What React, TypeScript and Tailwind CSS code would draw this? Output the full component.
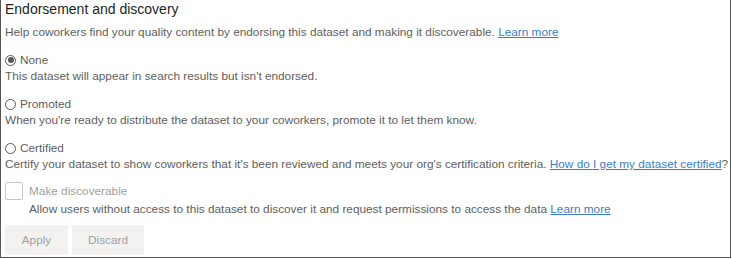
import React from "react";

function Radio({ checked }: { checked?: boolean }) {
  return (
    <span className="inline-flex items-center justify-center w-[11px] h-[11px] rounded-full border border-[#555] mr-[4px] shrink-0">
      {checked && <span className="w-[6px] h-[6px] rounded-full bg-[#555]" />}
    </span>
  );
}

export default function App() {
  return (
    <div className="w-[732px] h-[259px] bg-white" style={{ fontFamily: '"Liberation Sans", Arial, sans-serif' }}>
      <div className="w-[731px] h-[258px] border-l border-r border-b border-[#555] pl-[4px] text-[11.8px] text-[#605e5c] leading-[16px]">
        <div className="text-[14px] leading-[18px] text-[#201f1e]">Endorsement and discovery</div>
        <div className="mt-[6px]">
          Help coworkers find your quality content by endorsing this dataset and making it discoverable.{" "}
          <span className="text-[#3b7ec6] underline">Learn more</span>
        </div>
        <div className="mt-[12px] flex items-center">
          <Radio checked />None
        </div>
        <div>This dataset will appear in search results but isn't endorsed.</div>
        <div className="mt-[12px] flex items-center">
          <Radio />Promoted
        </div>
        <div>When you're ready to distribute the dataset to your coworkers, promote it to let them know.</div>
        <div className="mt-[12px] flex items-center">
          <Radio />Certified
        </div>
        <div className="whitespace-nowrap">
          Certify your dataset to show coworkers that it's been reviewed and meets your org's certification criteria.{" "}
          <span className="text-[#3b7ec6] underline">How do I get my dataset certified</span>?
        </div>
        <div className="mt-[10px] flex">
          <span className="w-[18px] h-[18px] border border-[#c8c6c4] rounded-[2px] mr-[6px] shrink-0" />
          <div className="pt-[1px]">
            <div className="text-[#a19f9d]">Make discoverable</div>
            <div className="mt-[2px]">
              Allow users without access to this dataset to discover it and request permissions to access the data{" "}
              <span className="text-[#3b7ec6] underline">Learn more</span>
            </div>
          </div>
        </div>
        <div className="mt-[8px] flex gap-[4px]">
          <div className="w-[63px] h-[30px] bg-[#f3f2f1] text-[#a19f9d] flex items-center justify-center">Apply</div>
          <div className="w-[72px] h-[30px] bg-[#f3f2f1] text-[#a19f9d] flex items-center justify-center">Discard</div>
        </div>
      </div>
    </div>
  );
}
